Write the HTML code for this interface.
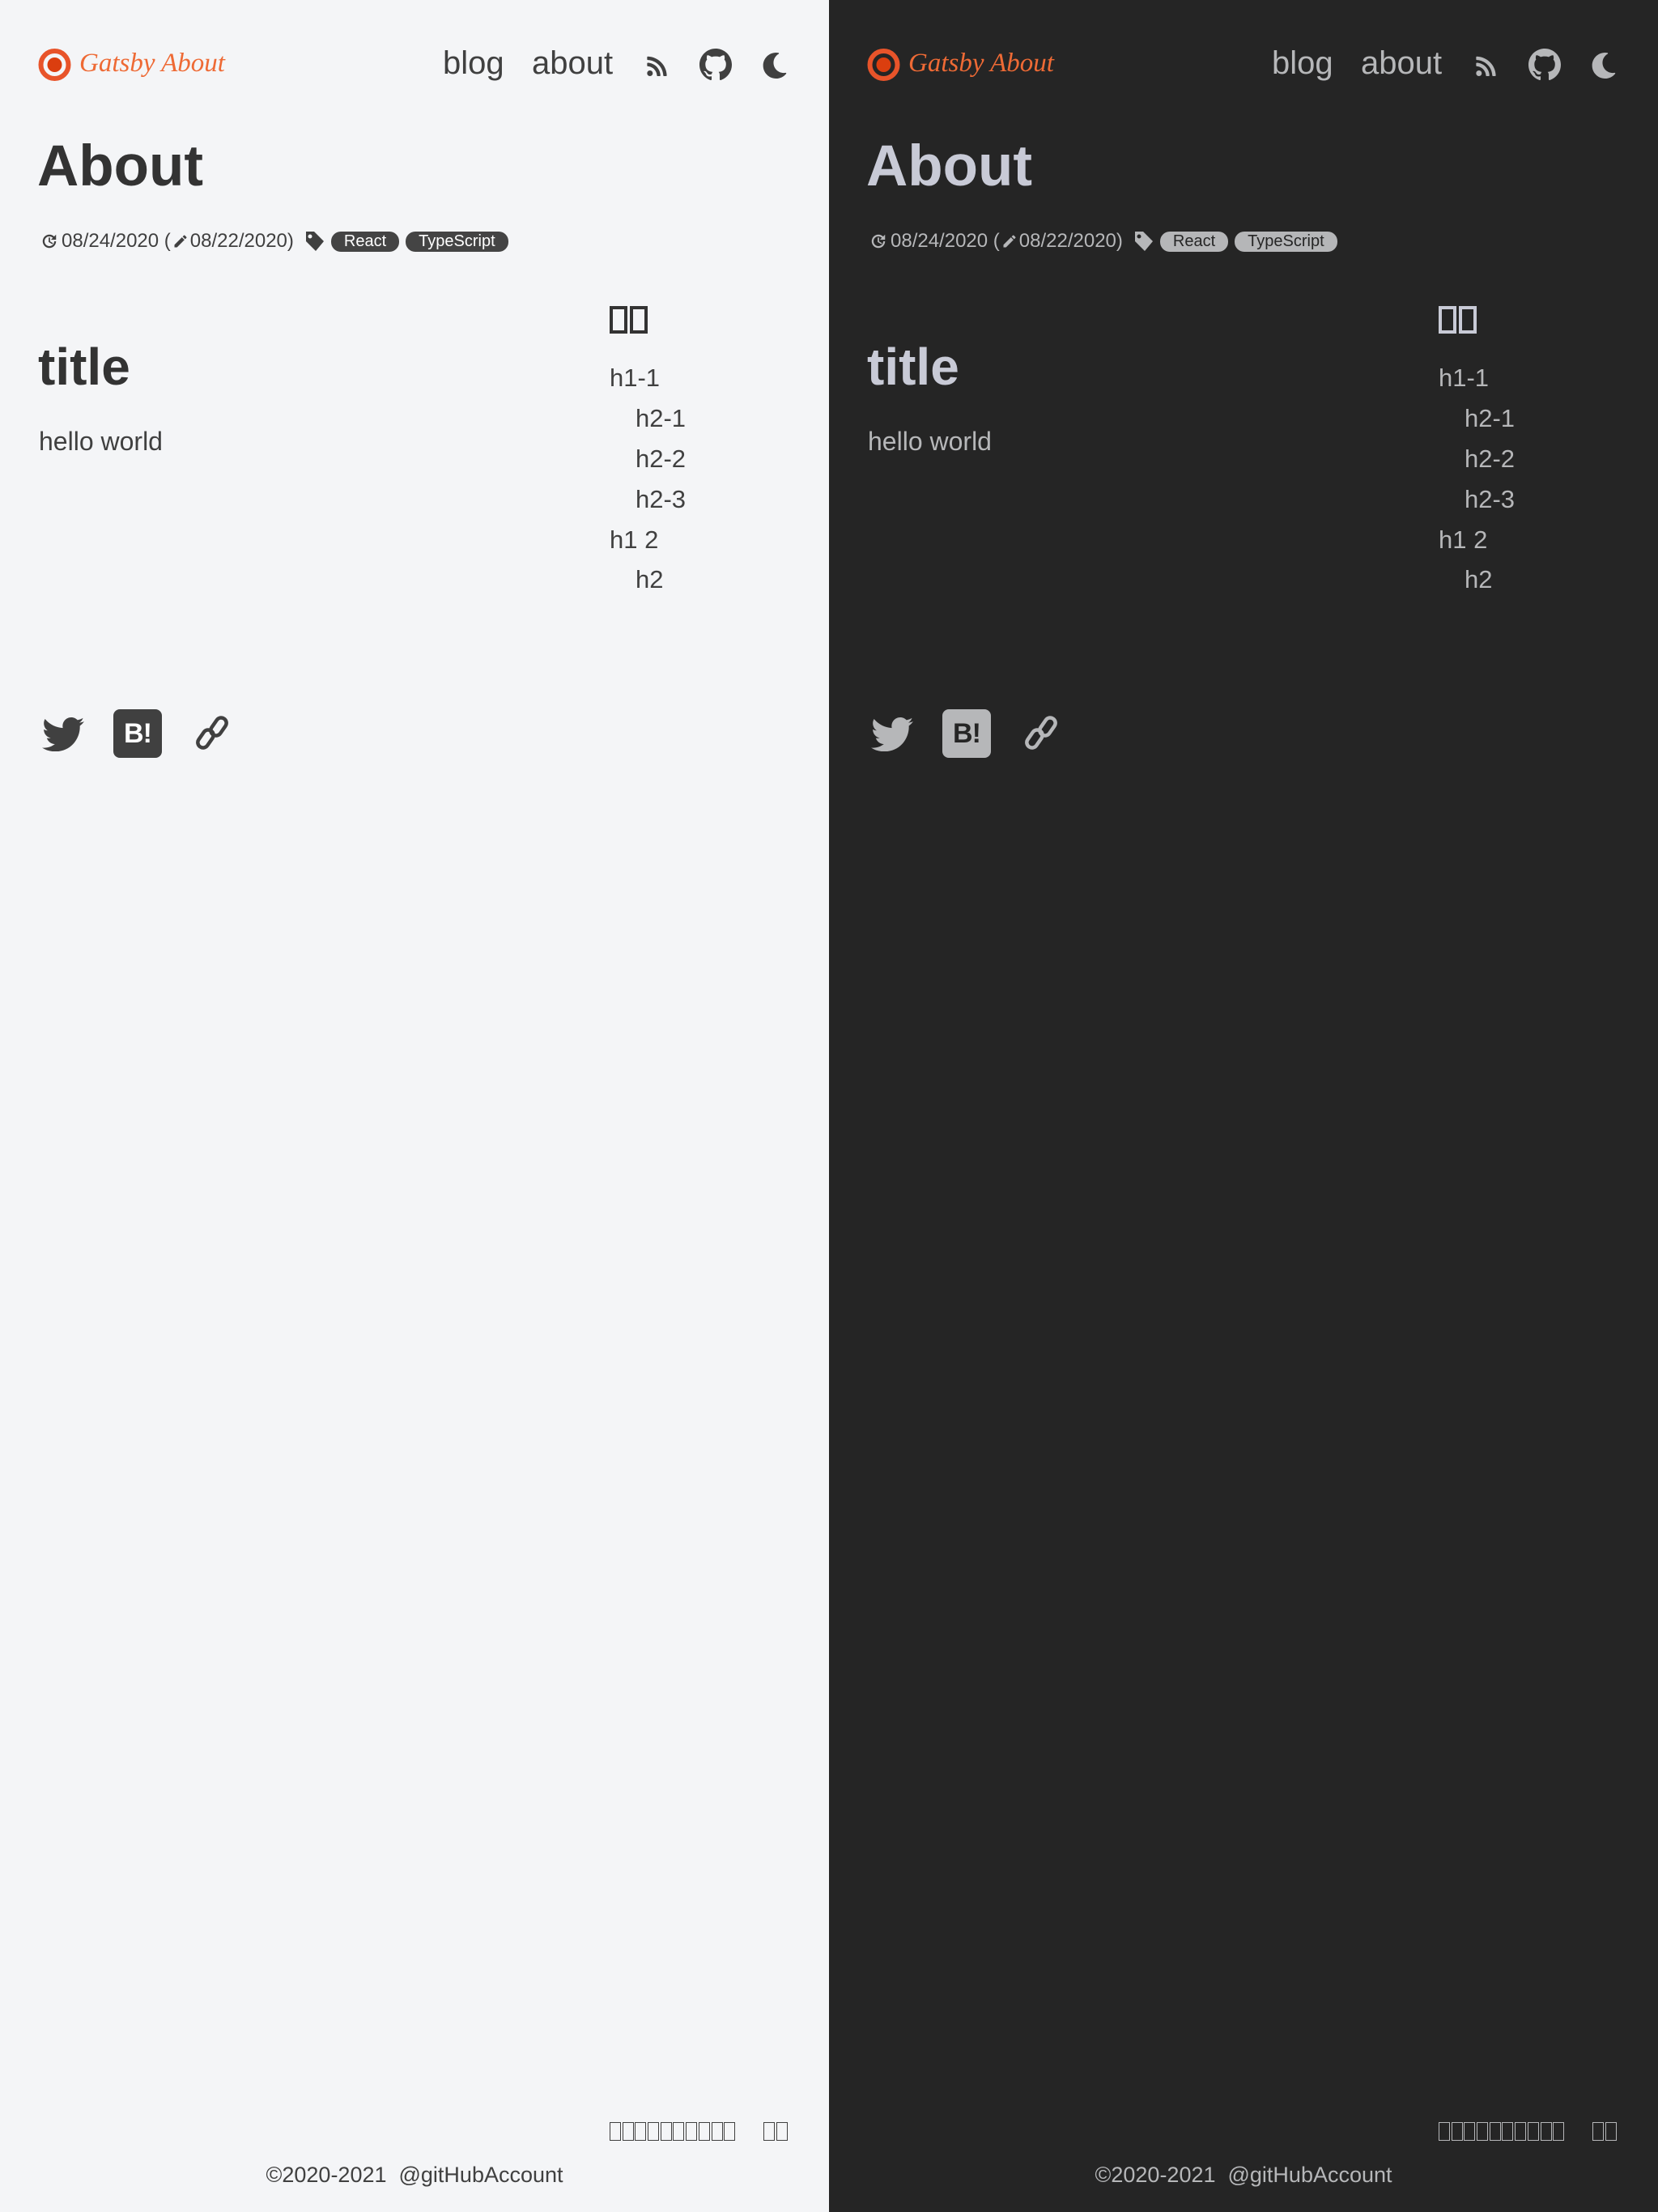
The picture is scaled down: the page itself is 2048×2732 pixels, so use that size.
<!DOCTYPE html>
<html><head><meta charset="utf-8"><style>
*{margin:0;padding:0;box-sizing:border-box}
html,body{width:2048px;height:2732px;overflow:hidden}
body{font-family:"Liberation Sans",Arial,sans-serif;position:relative}
.p{position:absolute;top:0;width:1024px;height:2732px}
.L{left:0;background:#f4f5f7;color:#404040;--fg:#404040;--h:#333;--tagbg:#444;--tagfg:#fff}
.D{left:1024px;background:#252525;color:#b8b9bb;--fg:#b6b7b9;--h:#c8cad6;--tagbg:#b5b6b8;--tagfg:#252525}
.a{position:absolute;white-space:nowrap}
.brand{left:98px;top:60px;font-family:"Liberation Serif",serif;font-style:italic;font-size:33px;color:#ee6a35}
.nav{top:56px;font-size:40px;color:var(--fg)}
.h1{left:46px;top:165px;font-size:71px;font-weight:bold;color:var(--h)}
.meta{left:50px;top:284px;font-size:24px;color:var(--fg);display:flex;align-items:center}
.tag{display:inline-block;background:var(--tagbg);color:var(--tagfg);font-size:20px;height:25px;line-height:25px;border-radius:12px;padding:0 16px;margin-left:8px}
.title{left:47px;top:416px;font-size:64px;font-weight:bold;color:var(--h)}
.hw{left:48px;top:527px;font-size:32px;color:var(--fg)}
.toc{font-size:31px;color:var(--fg)}
.bx{display:inline-block;border:1.6px solid var(--fg);vertical-align:top}
.tb{width:22px;height:34px;border:4px solid var(--h);margin-right:3px}
.fb{width:14px;height:23px;margin-right:1.7px}
.copy{left:0;width:1024px;text-align:center;top:2671px;font-size:27px;color:var(--fg)}
svg{position:absolute;fill:var(--fg)}
</style></head><body>
<div class="p L" id="l">
</div>
<div class="p D" id="d"></div>
<template id="t">
<svg style="left:46px;top:59px" width="43" height="42" viewBox="0 0 43 42"><circle cx="21.5" cy="21" r="17" fill="none" stroke="#e8542a" stroke-width="6"/><circle cx="21.5" cy="21" r="9" fill="#db3e0f"/></svg>
<div class="a brand">Gatsby About</div>
<div class="a nav" style="left:547px">blog</div>
<div class="a nav" style="left:657px">about</div>
<svg style="left:799px;top:68px" width="25" height="26" viewBox="0 0 448 480"><path d="M128.081 415.959c0 35.369-28.672 64.041-64.041 64.041S0 451.328 0 415.959s28.672-64.041 64.041-64.041 64.04 28.673 64.04 64.041zm175.66 47.25c-8.354-154.6-132.185-278.587-286.95-286.95C7.656 175.765 0 183.105 0 192.253v48.069c0 8.415 6.49 15.472 14.887 16.018 111.832 7.284 201.473 96.702 208.772 208.772.547 8.397 7.604 14.887 16.018 14.887h48.069c9.149.001 16.489-7.655 15.995-16.79zm144.249.288C439.596 229.677 251.465 40.445 16.503 32.01 7.473 31.686 0 38.981 0 48.016v48.068c0 8.625 6.835 15.645 15.453 15.999 191.179 7.839 344.627 161.316 352.465 352.465.353 8.618 7.373 15.453 15.999 15.453h48.068c9.034-.001 16.329-7.474 16.005-16.504z"/></svg>
<svg style="left:864px;top:60px" width="40" height="40" viewBox="0 0 16 16"><path d="M8 0C3.58 0 0 3.580 0 8c0 3.54 2.29 6.53 5.47 7.59.4.07.55-.17.55-.38 0-.19-.01-.82-.01-1.49-2.01.37-2.530-.49-2.69-.94-.09-.23-.48-.94-.82-1.13-.28-.15-.68-.52-.01-.53.63-.01 1.08.58 1.23.82.72 1.21 1.87.87 2.33.66.07-.52.28-.87.51-1.070-1.78-.2-3.64-.89-3.640-3.95 0-.87.31-1.59.82-2.15-.08-.2-.36-1.02.08-2.12 0 0 .67-.21 2.2.82.64-.18 1.32-.27 2-.27.68 0 1.36.09 2 .27 1.53-1.04 2.2-.82 2.2-.82.44 1.1.16 1.92.08 2.12.51.56.82 1.27.82 2.15 0 3.07-1.87 3.75-3.65 3.95.29.25.54.73.54 1.48 0 1.07-.01 1.93-.01 2.2 0 .21.15.46.55.38A8.013 8.013 0 0016 8c0-4.42-3.58-8-8-8z"/></svg>
<svg style="left:942px;top:65px" width="30" height="32" viewBox="27 0 460 512"><path d="M283.211 512c78.962 0 151.079-35.925 198.857-94.792 7.068-8.708-.639-21.43-11.562-19.35-124.203 23.654-238.262-71.576-238.262-196.954 0-72.222 38.662-138.635 101.498-174.394 9.686-5.512 7.25-20.197-3.756-22.23A258.156 258.156 0 0 0 283.211 0c-141.309 0-256 114.511-256 256 0 141.309 114.511 256 256 256z"/></svg>
<div class="a h1">About</div>
<div class="a meta">
<svg style="position:static;margin-right:4px" width="22" height="22" viewBox="0 0 24 24"><path d="M12 3a9 9 0 1 0 9 9h-2.5A6.5 6.5 0 1 1 12 5.5c1.8 0 3.4.7 4.6 1.9L14 10h7V3l-2.6 2.6A9 9 0 0 0 12 3zm-1 4v6l5 3 .9-1.5-4-2.4V7z"/></svg>08/24/2020 (<svg style="position:static;margin:0 2px" width="20" height="20" viewBox="0 0 24 24"><path d="M3 17.25V21h3.75L17.8 9.94l-3.75-3.75L3 17.25zM20.7 7.04a1 1 0 0 0 0-1.41l-2.34-2.34a1 1 0 0 0-1.41 0l-1.83 1.83 3.75 3.75 1.83-1.83z"/></svg>08/22/2020)<svg style="position:static;margin-left:14px" width="24" height="26" viewBox="0 0 24 26"><path d="M1 1h10l12 12-10 12L1 13zM6 4.5a2.5 2.5 0 1 0 0 5 2.5 2.5 0 0 0 0-5z" fill-rule="evenodd"/></svg><span class="tag" style="margin-left:8px">React</span><span class="tag">TypeScript</span>
</div>
<div class="a title">title</div>
<div class="a hw">hello world</div>
<div class="a" style="left:753px;top:378px"><span class="bx tb"></span><span class="bx tb"></span></div>
<div class="a toc" style="left:753px;top:449px">h1-1</div>
<div class="a toc" style="left:785px;top:499px">h2-1</div>
<div class="a toc" style="left:785px;top:549px">h2-2</div>
<div class="a toc" style="left:785px;top:599px">h2-3</div>
<div class="a toc" style="left:753px;top:649px">h1 2</div>
<div class="a toc" style="left:785px;top:698px">h2</div>
<svg style="left:52px;top:884px" width="52" height="44" viewBox="0 30 512 430"><path d="M459.37 151.716c.325 4.548.325 9.097.325 13.645 0 138.72-105.583 298.558-298.558 298.558-59.452 0-114.68-17.219-161.137-47.106 8.447.974 16.568 1.299 25.34 1.299 49.055 0 94.213-16.568 130.274-44.832-46.132-.975-84.792-31.188-98.112-72.772 6.498.974 12.995 1.624 19.818 1.624 9.421 0 18.843-1.3 27.614-3.573-48.081-9.747-84.143-51.980-84.143-102.985v-1.299c13.969 7.797 30.214 12.67 47.431 13.319-28.264-18.843-46.781-51.005-46.781-87.391 0-19.492 5.197-37.360 14.294-52.954 51.655 63.675 129.3 105.258 216.365 109.807-1.624-7.797-2.599-15.918-2.599-24.04 0-57.828 46.782-104.934 104.934-104.934 30.213 0 57.502 12.67 76.67 33.137 23.715-4.548 46.456-13.32 66.599-25.34-7.798 24.366-24.366 44.833-46.132 57.827 21.117-2.273 41.584-8.122 60.426-16.243-14.292 20.791-32.161 39.308-52.628 54.253z"/></svg>
<div class="a" style="left:140px;top:876px;width:60px;height:60px;border-radius:8px;background:var(--fg);color:var(--tagfg);font-weight:bold;font-size:34px;line-height:60px;text-align:center;letter-spacing:-1px">B!</div>
<svg style="left:238px;top:881px;fill:none;stroke:var(--fg);stroke-width:4.5" width="48" height="48" viewBox="0 0 48 48"><rect x="4" y="25" width="24" height="13" rx="6.5" transform="rotate(-55 16 31.5)"/><rect x="20" y="10" width="24" height="13" rx="6.5" transform="rotate(-55 32 16.5)"/></svg>
<div class="a" style="left:753px;top:2621px;line-height:0"><span class="bx fb"></span><span class="bx fb"></span><span class="bx fb"></span><span class="bx fb"></span><span class="bx fb"></span><span class="bx fb"></span><span class="bx fb"></span><span class="bx fb"></span><span class="bx fb"></span><span class="bx fb"></span><span style="display:inline-block;width:33px"></span><span class="bx fb"></span><span class="bx fb"></span></div>
<div class="a copy">©2020-2021&nbsp; @gitHubAccount</div>
</template>
<script>
var t=document.getElementById('t').innerHTML;
document.getElementById('l').innerHTML=t;
document.getElementById('d').innerHTML=t;
</script>
</body></html>
